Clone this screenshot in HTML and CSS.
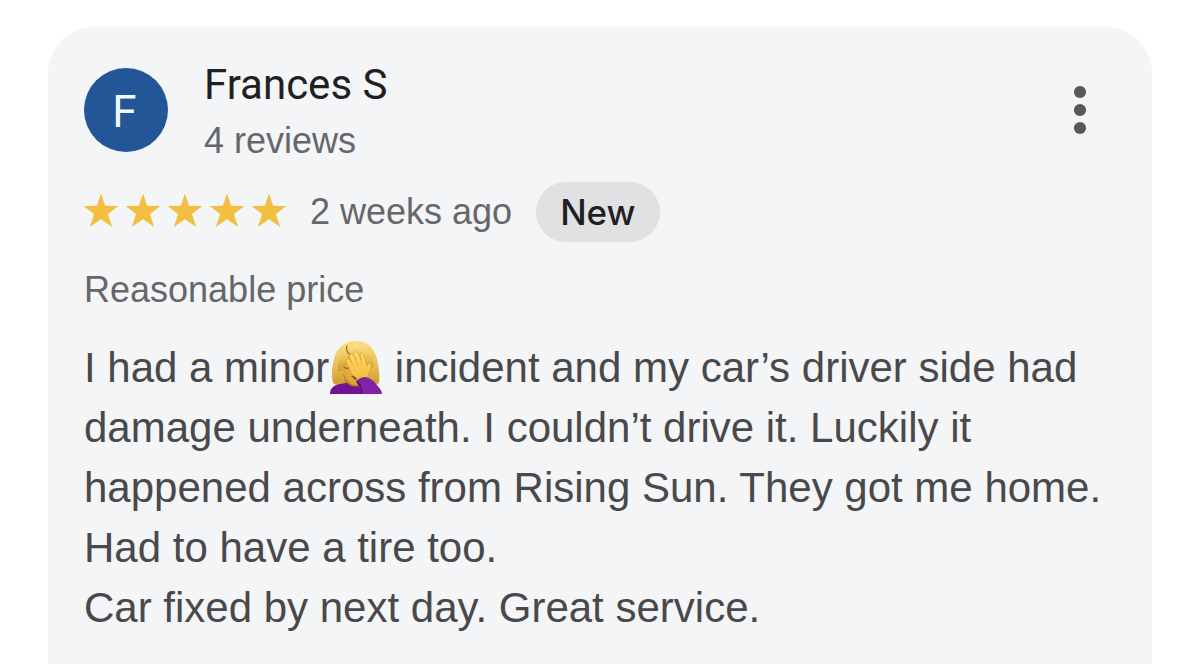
FILE: index.html
```html
<!DOCTYPE html>
<html lang="en">
<head>
<meta charset="utf-8">
<meta name="viewport" content="width=device-width, initial-scale=1">
<title>Review by Frances S</title>
<link rel="stylesheet" href="styles.css">
</head>
<body>
<svg class="defs" aria-hidden="true">
  <symbol id="star" viewBox="0 0 36 36"><path d="M18 0.5 L22.2 12.7 L35.5 13 L25 20.9 L29.1 34 L18 26.3 L6.9 34 L11 20.9 L0.5 13 L13.8 12.7Z"/></symbol>
</svg>
<article class="review">
  <header class="author">
    <div class="avatar" aria-hidden="true">F</div>
    <div class="identity">
      <h1 class="name">Frances S</h1>
      <p class="count">4 reviews</p>
    </div>
    <button class="menu" type="button" aria-label="More options">
      <svg viewBox="0 0 14 50" class="dots" aria-hidden="true"><circle cx="7" cy="7" r="6.1"/><circle cx="7" cy="25" r="6.1"/><circle cx="7" cy="43" r="6.1"/></svg>
    </button>
  </header>
  <div class="meta">
    <div class="stars" role="img" aria-label="5 out of 5 stars">
      <svg class="star"><use href="#star"/></svg>
      <svg class="star"><use href="#star"/></svg>
      <svg class="star"><use href="#star"/></svg>
      <svg class="star"><use href="#star"/></svg>
      <svg class="star"><use href="#star"/></svg>
    </div>
    <span class="age">2 weeks ago</span>
    <span class="badge">New</span>
  </div>
  <p class="price">Reasonable price</p>
  <p class="text">I had a minor<svg class="emoji" viewBox="0 0 54 54" role="img" aria-label="Woman facepalming">
      <defs>
        <linearGradient id="hair" x1="0" y1="0" x2="0" y2="1"><stop offset="0" stop-color="#f8df86"/><stop offset=".45" stop-color="#edc558"/><stop offset="1" stop-color="#cf9a35"/></linearGradient>
        <radialGradient id="face" cx=".5" cy=".4" r=".65"><stop offset="0" stop-color="#f3c24a"/><stop offset="1" stop-color="#dc9a30"/></radialGradient>
        <linearGradient id="hand" x1="0" y1="0" x2="0" y2="1"><stop offset="0" stop-color="#ffdc66"/><stop offset="1" stop-color="#f2b838"/></linearGradient>
      </defs>
      <path fill="url(#hair)" d="M27 1C38 1 45 7 48 19C50 28 51 37 50 43Q46 46 38 45H14Q7 46 4 43C2 35 3 27 5 19C8 7 16 1 27 1Z"/>
      <path fill="#b97a26" d="M14 33Q20 45 30 44L30 50Q22 50 17 45Z"/>
      <path fill="#701591" d="M1 54C1 48 5 45 11 44L18 43Q24 49 33 45L43 44C49 46 52 48 53 54Z"/>
      <path fill="url(#face)" d="M17 16Q27 8 39 15Q43 22 41 32C38 40 33 45 27 45C20 45 16 40 14 31Q12 22 17 16Z"/>
      <path fill="url(#hair)" d="M19 6Q34 1 43 15Q45 23 44 29Q37 24 30 19Q21 14 19 6ZM19 7Q22 14 18 19Q14 24 13 31L9 31Q8 16 19 7Z"/>
      <path fill="none" stroke="#94682a" stroke-width="1.2" stroke-linecap="round" d="M18 6Q16 11 22 16M15 27Q18 30 21 27"/>
      <path fill="#70401f" d="M22 36Q26 34 28 39L26 40Q25 38 22 36Z"/>
      <path fill="url(#hand)" stroke="#d7972f" stroke-width=".6" d="M28 38C23 36 21 32 20 28L17 21Q17 18 20 19L23 23L20 16Q21 12 24 14L27 20L24 13Q26 10 29 13L32 20L31 14Q33 12 35 15L38 26L40 23Q43 23 42 28L38 38L35 43L28 42Z"/>
      <path fill="none" stroke="#dfa43a" stroke-width=".7" d="M23 23L25 27M27 20L29 26M32 20L33 26"/>
      <path fill="#8422a5" d="M27 42Q30 37 37 37C44 39 50 45 52 54H33Q31 47 27 42Z"/>
      <path fill="none" stroke="#571170" stroke-width="1.4" d="M28 41Q33 46 33 54"/>
    </svg> incident and my car’s driver side had damage underneath. I couldn’t drive it. Luckily it happened across from Rising Sun. They got me home. Had to have a tire too.<br>Car fixed by next day. Great service.</p>
</article>
</body>
</html>
```
FILE: styles.css
```css
* { box-sizing: border-box; }

body {
  margin: 0;
  background: #fff;
  font-family: "Liberation Sans", Arial, sans-serif;
  font-size: 36px;
  line-height: 44px;
  color: #66676a;
}

h1, p { margin: 0; }

.defs { position: absolute; width: 0; height: 0; }

.review {
  margin: 27px 48px 0;
  min-height: calc(100vh - 27px);
  padding: 32px 36px 0;
  border-radius: 46px 46px 0 0;
  background: #f4f5f7;
}

.author {
  display: flex;
  align-items: flex-start;
  gap: 36px;
}

.avatar {
  width: 84px;
  height: 84px;
  margin-top: 9px;
  padding-right: 2px;
  border-radius: 50%;
  background: #235697;
  color: #f1f8ff;
  font: 44px/86px Inter, sans-serif;
  text-align: center;
}

.identity { flex: 1; }

.name {
  font: 400 42px/52px Roboto, sans-serif;
  color: #1f2023;
}

.count { margin-top: 8px; }

.menu {
  display: flex;
  justify-content: center;
  width: 44px;
  margin-top: 26px;
  margin-right: 14px;
  padding: 0;
  border: 0;
  background: none;
}

.dots { width: 14px; height: 50px; fill: #57585a; }

.meta {
  display: flex;
  align-items: center;
  gap: 24px;
  margin-top: 19px;
}

.stars { display: flex; gap: 6px; margin: 0 -1px 2px; }

.star { width: 36px; height: 36px; fill: #f2bf42; }

.badge {
  padding: 0 24px;
  border-radius: 30px;
  background: #e0e1e3;
  color: #1f2023;
  font: 500 35px/60px Inter, sans-serif;
}

.price { margin-top: 26px; }

.text {
  margin-top: 26px;
  font-size: 42px;
  line-height: 60px;
  color: #49494b;
}

.emoji {
  width: 54px;
  height: 54px;
  vertical-align: -12px;
}
```
